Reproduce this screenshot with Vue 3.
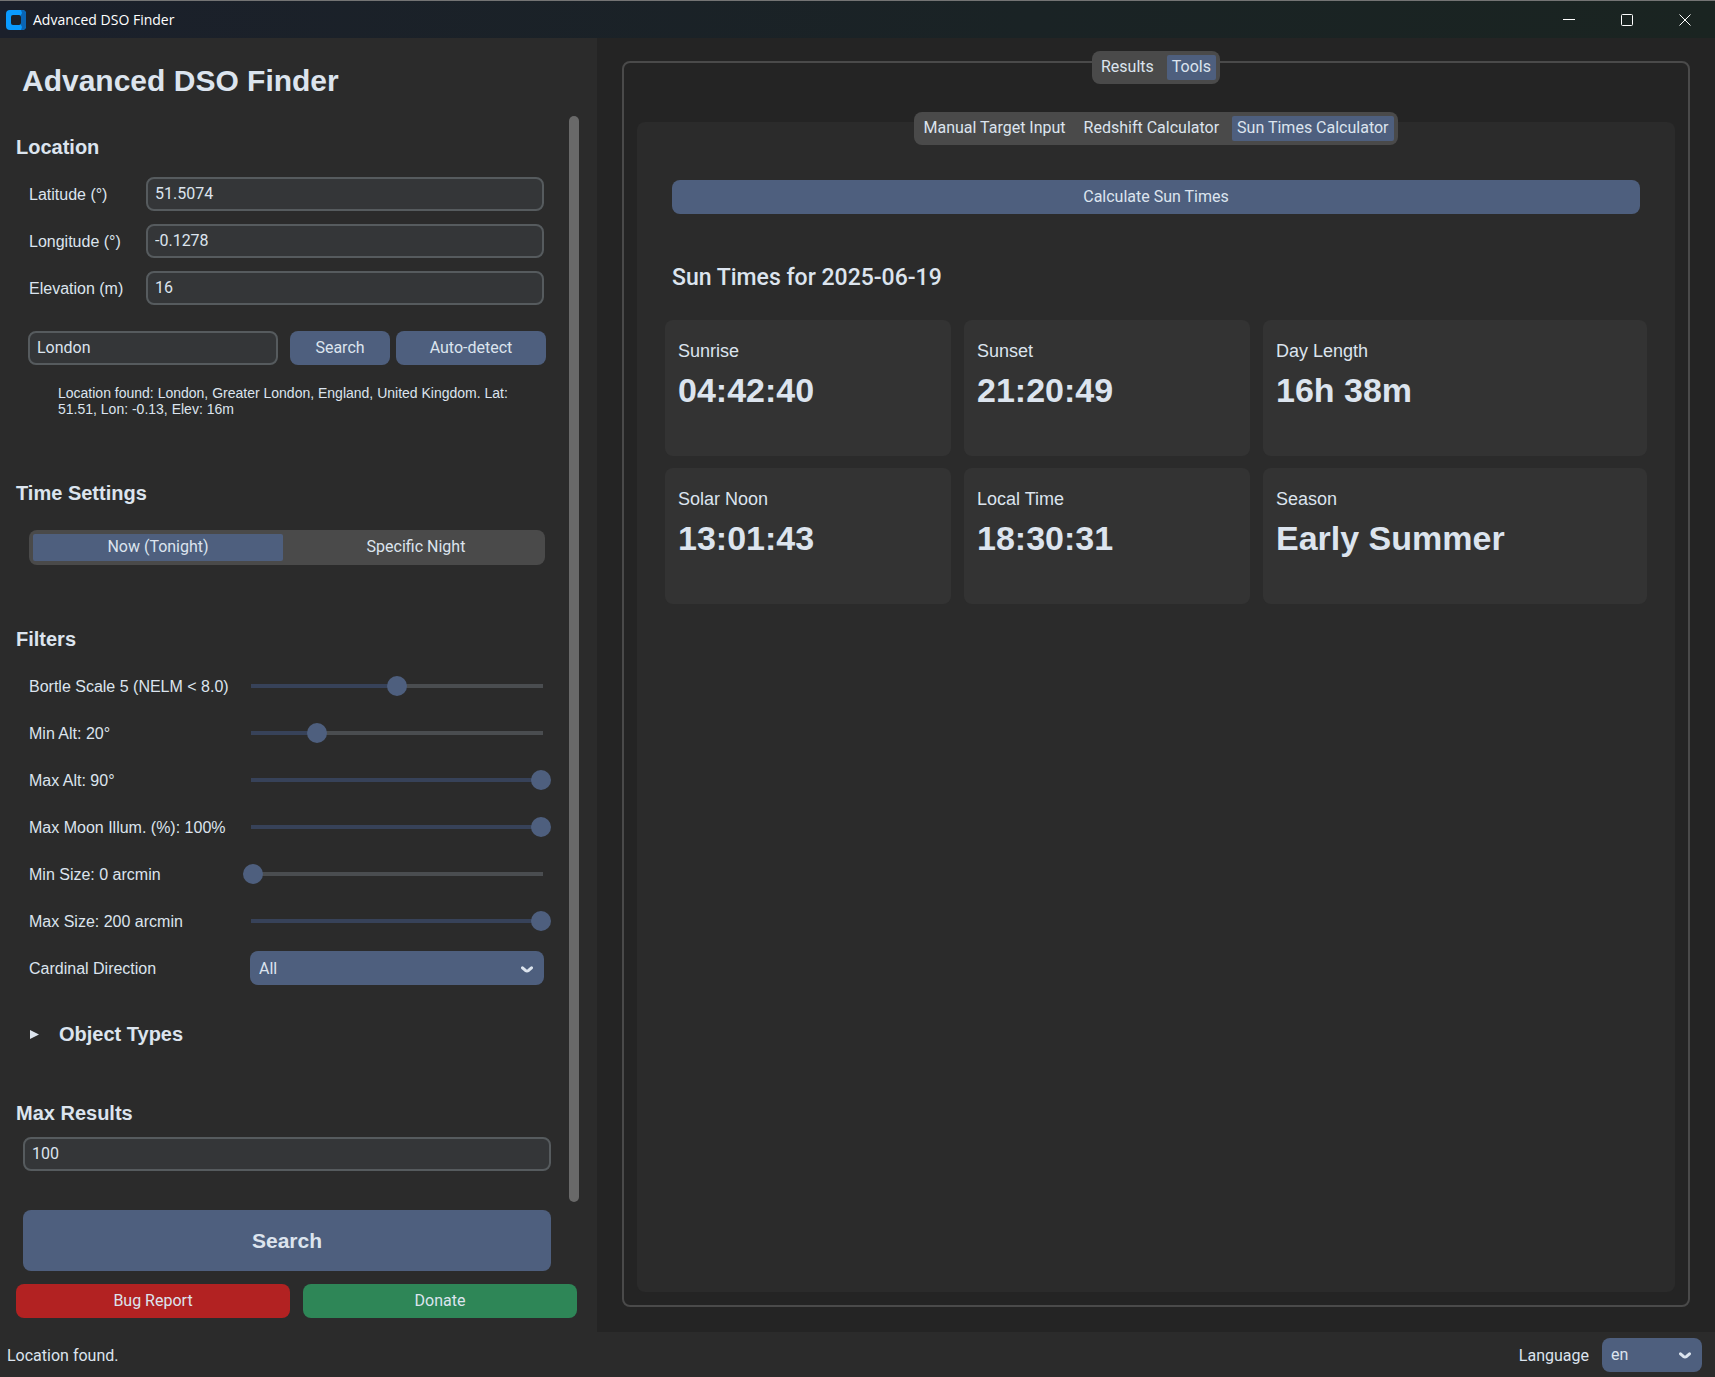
<script setup>
import { ref, reactive } from 'vue'

const coordinates = reactive([
  { id: 'latitude', label: 'Latitude (°)', value: '51.5074' },
  { id: 'longitude', label: 'Longitude (°)', value: '-0.1278' },
  { id: 'elevation', label: 'Elevation (m)', value: '16' },
])
const city = ref('London')
const night = ref('Now (Tonight)')
const nights = ['Now (Tonight)', 'Specific Night']

const filters = reactive([
  { id: 'bortle', min: 1, max: 9, value: 5, label: () => 'Bortle Scale 5 (NELM < 8.0)' },
  { id: 'min-alt', min: 0, max: 90, value: 20, label: (v) => `Min Alt: ${v}°` },
  { id: 'max-alt', min: 0, max: 90, value: 90, label: (v) => `Max Alt: ${v}°` },
  { id: 'moon', min: 0, max: 100, value: 100, label: (v) => `Max Moon Illum. (%): ${v}%` },
  { id: 'min-size', min: 0, max: 200, value: 0, label: (v) => `Min Size: ${v} arcmin` },
  { id: 'max-size', min: 0, max: 200, value: 200, label: (v) => `Max Size: ${v} arcmin` },
])
const fraction = (f) => (f.value - f.min) / (f.max - f.min)

const direction = ref('All')
const maxResults = ref('100')
const language = ref('en')

const mainTabs = ['Results', 'Tools']
const mainTab = ref('Tools')
const toolTabs = ['Manual Target Input', 'Redshift Calculator', 'Sun Times Calculator']
const toolTab = ref('Sun Times Calculator')

const cards = [
  { label: 'Sunrise', value: '04:42:40' },
  { label: 'Sunset', value: '21:20:49' },
  { label: 'Day Length', value: '16h 38m' },
  { label: 'Solar Noon', value: '13:01:43' },
  { label: 'Local Time', value: '18:30:31' },
  { label: 'Season', value: 'Early Summer' },
]
</script>

<template>
  <div class="window">
    <header class="titlebar">
      <svg class="app-icon" width="20" height="20" viewBox="0 0 20 20" aria-hidden="true">
        <rect width="20" height="20" rx="4" fill="#0a9bff" />
        <path d="M15 0h1a4 4 0 0 1 4 4v12a4 4 0 0 1-4 4h-1l1-3-1-2V5l1-2z" fill="#0a64b4" />
        <rect x="5" y="5" width="10" height="10" rx="2" fill="#1b2029" />
      </svg>
      <span class="app-name">Advanced DSO Finder</span>
      <button class="win-btn" aria-label="Minimize">
        <svg width="12" height="12" viewBox="0 0 12 12"><path d="M0 5.5h12" /></svg>
      </button>
      <button class="win-btn" aria-label="Maximize">
        <svg width="12" height="12" viewBox="0 0 12 12"><rect x=".5" y=".5" width="11" height="11" rx="1" /></svg>
      </button>
      <button class="win-btn" aria-label="Close">
        <svg width="12" height="12" viewBox="0 0 12 12"><path d="M.5.5l11 11M11.5.5l-11 11" /></svg>
      </button>
    </header>

    <div class="body">
      <aside class="sidebar">
        <h1>Advanced DSO Finder</h1>
        <div class="scroll-area">
          <div class="settings">
            <section>
              <h2>Location</h2>
              <div class="rows">
                <div v-for="c in coordinates" :key="c.id" class="row coord">
                  <label :for="c.id">{{ c.label }}</label>
                  <input :id="c.id" v-model="c.value" class="field" type="text" />
                </div>
              </div>
              <div class="city-row">
                <input v-model="city" class="field" type="text" aria-label="City" />
                <button class="btn city-search">Search</button>
                <button class="btn city-auto">Auto-detect</button>
              </div>
              <p class="note">Location found: London, Greater London, England, United Kingdom. Lat: 51.51, Lon: -0.13, Elev: 16m</p>
            </section>

            <section class="time">
              <h2>Time Settings</h2>
              <div class="night">
                <button
                  v-for="n in nights"
                  :key="n"
                  class="seg"
                  :class="{ on: night === n }"
                  @click="night = n"
                >{{ n }}</button>
              </div>
            </section>

            <section class="filters">
              <h2>Filters</h2>
              <div class="rows">
                <div v-for="f in filters" :key="f.id" class="row filter">
                  <label :for="f.id">{{ f.label(f.value) }}</label>
                  <input
                    :id="f.id"
                    v-model.number="f.value"
                    type="range"
                    :min="f.min"
                    :max="f.max"
                    :style="{ '--at': fraction(f) }"
                  />
                </div>
                <div class="row filter">
                  <label for="direction">Cardinal Direction</label>
                  <div class="select">
                    <select id="direction" v-model="direction"><option>All</option></select>
                    <svg width="12" height="7" viewBox="0 0 12 7" aria-hidden="true"><path d="M1.5 1.8L4.4 4.4Q6 5.4 7.6 4.4L10.5 1.8" /></svg>
                  </div>
                </div>
              </div>
            </section>

            <button class="disclosure" aria-expanded="false">
              <svg width="10" height="10" viewBox="0 0 10 10" aria-hidden="true"><path d="M0 1l9 4.5L0 10z" /></svg>
              <span>Object Types</span>
            </button>

            <section class="results">
              <h2><label for="max-results">Max Results</label></h2>
              <input id="max-results" v-model="maxResults" class="field" type="text" />
            </section>
          </div>
          <div class="scrollbar" aria-hidden="true"></div>
        </div>
        <button class="btn search">Search</button>
        <div class="links">
          <button class="btn bug">Bug Report</button>
          <button class="btn donate">Donate</button>
        </div>
      </aside>

      <main class="content">
        <div class="tabview outer">
          <div class="tabs">
            <button
              v-for="t in mainTabs"
              :key="t"
              class="seg"
              :class="{ on: mainTab === t }"
              @click="mainTab = t"
            >{{ t }}</button>
          </div>
          <div class="tabview inner">
            <div class="tabs">
              <button
                v-for="t in toolTabs"
                :key="t"
                class="seg"
                :class="{ on: toolTab === t }"
                @click="toolTab = t"
              >{{ t }}</button>
            </div>
            <div class="tool">
              <button class="btn calculate">Calculate Sun Times</button>
              <h3>Sun Times for 2025-06-19</h3>
              <div class="cards">
                <article v-for="c in cards" :key="c.label" class="card">
                  <div class="card-label">{{ c.label }}</div>
                  <div class="card-value">{{ c.value }}</div>
                </article>
              </div>
            </div>
          </div>
        </div>
      </main>
    </div>

    <footer class="statusbar">
      <span class="status">Location found.</span>
      <label for="language">Language</label>
      <div class="select language">
        <select id="language" v-model="language"><option>en</option></select>
        <svg width="12" height="7" viewBox="0 0 12 7" aria-hidden="true"><path d="M1.5 1.8L4.4 4.4Q6 5.4 7.6 4.4L10.5 1.8" /></svg>
      </div>
    </footer>
  </div>
</template>

<style>
body {
  margin: 0;
  background: #242424;
}
</style>

<style scoped>
* {
  box-sizing: border-box;
}

.window {
  display: flex;
  flex-direction: column;
  min-height: 100vh;
  background: #242424;
  color: #dce4ee;
  font: 16px/20px Roboto, sans-serif;
}

button,
input,
select {
  margin: 0;
  border: 0;
  font: inherit;
  color: inherit;
}

h1,
h2,
h3,
p {
  margin: 0;
}

/* Title bar */
.titlebar {
  display: flex;
  align-items: stretch;
  height: 38px;
  padding: 0 1px 0 6px;
  border-top: 1px solid #747474;
  background: linear-gradient(90deg, #1b202b, #1a2325 60%, #1a2421);
  color: #fff;
}

.app-icon {
  align-self: center;
}

.app-name {
  flex: 1;
  align-self: center;
  padding-left: 7px;
  font: 14px/20px "Open Sans", sans-serif;
}

.win-btn {
  display: flex;
  align-items: center;
  justify-content: center;
  width: 58px;
  padding: 0;
  background: none;
}

.win-btn svg {
  fill: none;
  stroke: #fff;
}

/* Sidebar */
.body {
  flex: 1;
  display: flex;
}

.sidebar {
  flex: 0 0 597px;
  display: flex;
  flex-direction: column;
  padding: 25px 18px 14px 16px;
  background: #2b2b2b;
}

h1 {
  margin: 0 6px 17px;
  font: bold 30px/36px "Liberation Sans", Arial, sans-serif;
}

h2 {
  font: bold 20px/24px "Liberation Sans", Arial, sans-serif;
}

.scroll-area {
  flex: 1;
  display: flex;
}

.settings {
  flex: 1;
  display: flex;
  flex-direction: column;
  padding-top: 19px;
}

.scrollbar {
  width: 10px;
  border-radius: 5px;
  background: #696969;
}

.rows {
  display: flex;
  flex-direction: column;
  gap: 13px;
  margin: 18px 25px 0 13px;
}

.row {
  display: grid;
  align-items: center;
  height: 34px;
  font-family: "Liberation Sans", Arial, sans-serif;
}

.row label {
  padding-top: 2px;
}

.coord {
  grid-template-columns: 117px 1fr;
}

.filter {
  grid-template-columns: 221px 1fr;
}

.field {
  width: 100%;
  min-width: 0;
  height: 34px;
  padding: 0 7px 2px;
  border: 2px solid #565b5e;
  border-radius: 8px;
  background: #343638;
  font-family: Roboto, sans-serif;
}

.btn {
  height: 34px;
  padding: 0 8px;
  border-radius: 8px;
  background: #4e5f7e;
}

.city-row {
  display: flex;
  margin: 26px 23px 0 12px;
}

.city-search {
  flex: 0 0 100px;
  margin: 0 6px 0 12px;
}

.city-auto {
  flex: 0 0 150px;
}

.note {
  margin: 20px 40px 0 42px;
  font: 14px/16px "Liberation Sans", Arial, sans-serif;
}

.time {
  margin-top: 64px;
}

.night {
  display: grid;
  grid-template-columns: 1fr 1fr;
  gap: 8px;
  height: 35px;
  margin: 25px 24px 0 13px;
  padding: 4px;
  border-radius: 8px;
  background: #4a4a4a;
}

.seg {
  padding: 0 5px 2px;
  border-radius: 2px;
  background: transparent;
  white-space: nowrap;
}

.seg.on {
  background: #4e5f7e;
}

.filters {
  margin-top: 62px;
}

input[type="range"] {
  --stop: calc(10px + (100% - 20px) * var(--at));
  appearance: none;
  width: calc(100% + 14px);
  height: 20px;
  margin: 0 -7px;
  background: linear-gradient(
      90deg,
      transparent 8px,
      #374259 8px,
      #374259 var(--stop),
      #4a4d50 var(--stop),
      #4a4d50 calc(100% - 8px),
      transparent calc(100% - 8px)
    )
    center / 100% 4px no-repeat;
}

input[type="range"]::-webkit-slider-thumb {
  appearance: none;
  width: 20px;
  height: 20px;
  border-radius: 50%;
  background: #4e5f7e;
}

.select {
  display: grid;
  align-items: center;
}

.select > * {
  grid-area: 1 / 1;
}

.select select {
  appearance: none;
  width: 100%;
  height: 34px;
  padding: 1px 30px 0 9px;
  border-radius: 8px;
  background: #4e5f7e;
  font-family: Roboto, sans-serif;
}

.select svg {
  justify-self: end;
  margin: 2px 11px 0 0;
  fill: none;
  stroke: #dce4ee;
  stroke-width: 3;
  stroke-linecap: round;
  pointer-events: none;
}

.disclosure {
  display: flex;
  align-items: center;
  gap: 19px;
  margin: 37px 0 0 14px;
  padding: 0;
  background: none;
  font: bold 20px/24px "Liberation Sans", Arial, sans-serif;
}

.disclosure svg {
  fill: #dce4ee;
}

.results {
  display: grid;
  gap: 12px;
  margin-top: 55px;
  padding: 0 18px 31px 0;
}

.results .field {
  width: auto;
  margin-left: 7px;
}

.search {
  height: 61px;
  margin: 8px 28px 0 7px;
  font: bold 21px/24px "Liberation Sans", Arial, sans-serif;
}

.links {
  display: grid;
  grid-template-columns: 1fr 1fr;
  gap: 13px;
  margin: 13px 2px 0 0;
}

.bug {
  background: #b22222;
}

.donate {
  background: #2e8657;
}

/* Main area */
.content {
  flex: 1;
  display: flex;
  padding: 13px 25px 25px;
}

.tabview {
  flex: 1;
  display: flex;
  flex-direction: column;
  margin-top: 10px;
  border-radius: 8px;
}

.outer {
  padding: 0 13px 13px;
  border: 2px solid #4a4a4a;
}

.inner {
  margin-top: 38px;
  background: #2b2b2b;
}

.tabs {
  display: flex;
  align-self: center;
  gap: 8px;
  height: 33px;
  margin-top: -10px;
  padding: 4px;
  border-radius: 8px;
  background: #4a4a4a;
}

.outer > .tabs {
  margin-top: -12px;
}

.tool {
  display: flex;
  flex-direction: column;
  padding: 35px 28px 28px;
}

.calculate {
  margin: 0 7px;
}

h3 {
  margin: 50px 7px 0;
  font: 500 23px/28px Roboto, sans-serif;
}

.cards {
  display: grid;
  grid-template-columns: 286fr 286fr 384fr;
  gap: 12px 13px;
  margin-top: 28px;
}

.card {
  height: 136px;
  padding: 20px 13px;
  border-radius: 8px;
  background: #333;
}

.card-label {
  font: 18px/22px "Liberation Sans", Arial, sans-serif;
}

.card-value {
  margin-top: 8px;
  font: bold 34px/40px "Liberation Sans", Arial, sans-serif;
}

/* Status bar */
.statusbar {
  display: flex;
  align-items: center;
  height: 45px;
  padding: 0 13px 0 7px;
  background: #2b2b2b;
}

.statusbar > .status,
.statusbar > label {
  padding-top: 2px;
}

.status {
  flex: 1;
}

.language {
  width: 100px;
  margin-left: 13px;
}
</style>
